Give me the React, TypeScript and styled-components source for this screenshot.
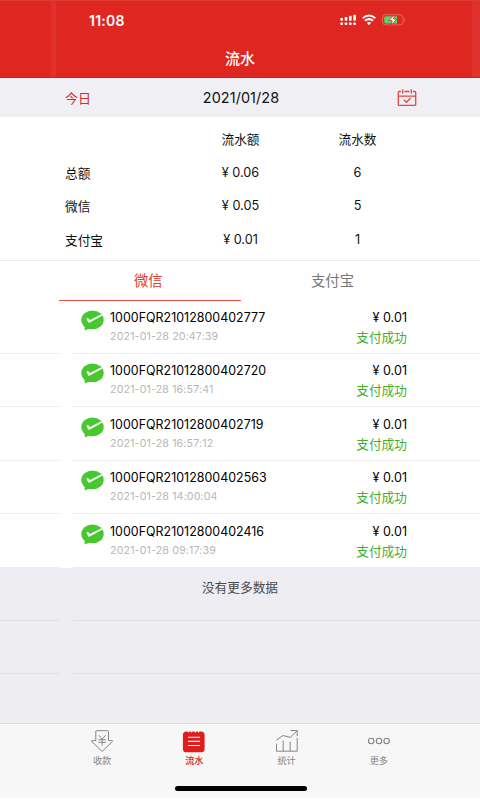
import React from "react";
import styled, { createGlobalStyle, css } from "styled-components";

const GlobalStyle = createGlobalStyle`
  * { box-sizing: border-box; }
  body { margin: 0; background: #fff; }
`;

const Screen = styled.main`
  width: 480px;
  height: 798px;
  display: flex;
  flex-direction: column;
  overflow: hidden;
  background: #fff;
  color: #111;
  font-family: Inter, "Noto Sans CJK SC", sans-serif;
  white-space: nowrap;
`;

const Header = styled.header`
  height: 78px;
  flex: none;
  color: #fff;
  background: linear-gradient(90deg, #df2721 51px, #df322c 51px, #df322c 56px, #df2721 56px, #df2721 472px, #df322c 472px);
  border-top: 1px solid #df3934;
  border-bottom: 1px solid #c9231e;
`;

const StatusBar = styled.div`
  height: 38px;
  padding: 0 74px 0 89px;
  display: flex;
  align-items: center;
  justify-content: space-between;
`;

const Clock = styled.span`
  font-size: 14px;
  font-weight: 600;
  letter-spacing: 0.25px;
  line-height: 18px;
  padding-top: 1px;
`;

const Title = styled.h1`
  margin: 9px 0 0;
  font-size: 15px;
  line-height: 22px;
  font-weight: 500;
  text-align: center;
`;

const DateBar = styled.section`
  height: 39px;
  flex: none;
  display: grid;
  grid-template-columns: 1fr auto 1fr;
  align-items: center;
  padding: 0 63px 0 65px;
  background: #efeff4;
`;

const Today = styled.span`
  font-size: 13px;
  color: #d22b2e;
`;

const CurrentDate = styled.span`
  font-size: 14.4px;
  letter-spacing: 0.1px;
`;

const CalendarSlot = styled.span`
  display: flex;
  justify-content: flex-end;
`;

const Summary = styled.section`
  height: 144px;
  flex: none;
  padding-top: 5px;
  border-bottom: 1px solid #ebebeb;
  font-size: 12.7px;
`;

const SummaryRow = styled.div`
  height: 33.5px;
  display: grid;
  grid-template-columns: 117px 117px 117px;
  padding-left: 65px;
  align-items: center;
  text-align: center;
  & > :first-child { text-align: left; }
`;

const Tabs = styled.nav`
  height: 39.6px;
  flex: none;
  display: flex;
  padding-left: 59px;
`;

const Tab = styled.span<{ $active?: boolean }>`
  width: ${(p) => (p.$active ? 181.5 : 184)}px;
  padding-top: 9px;
  padding-right: ${(p) => (p.$active ? 3 : 0)}px;
  font-size: 14.3px;
  line-height: 22px;
  text-align: center;
  color: ${(p) => (p.$active ? "#df3b35" : "#777")};
  ${(p) => p.$active && css`border-bottom: 1px solid #df4d45;`}
`;

const List = styled.section`
  height: 422.4px;
  flex: none;
  overflow: hidden;
  background: #eeedf2;
`;

const rowLine = (color: string, gap: string) => css`
  &::after {
    content: "";
    height: 1px;
    flex: none;
    background: linear-gradient(90deg, ${color} 59px, ${gap} 59px, ${gap} 73px, ${color} 73px);
  }
`;

const Row = styled.div`
  height: 53.4px;
  display: flex;
  flex-direction: column;
  background: #fff;
  ${rowLine("#ececee", "#fff")}
`;

const RowBody = styled.div`
  flex: 1;
  display: flex;
  padding: 8.400px 73px 0 80.500px;
`;

const RowMain = styled.div`
  flex: 1;
  padding-left: 6.500px;
`;

const OrderId = styled.div`
  font-size: 12.4px;
  letter-spacing: 0.04px;
  line-height: 18px;
  color: #000;
`;

const Timestamp = styled.div`
  margin-top: 1px;
  font-size: 10.7px;
  letter-spacing: 0.12px;
  line-height: 18px;
  color: #b8b8b8;
`;

const RowAmount = styled.div`
  text-align: right;
  font-size: 12.6px;
  line-height: 18px;
  color: #000;
`;

const Success = styled.div`
  margin-top: 1px;
  font-size: 12.7px;
  line-height: 19px;
  color: #43b02e;
`;

const EmptyRow = styled.div`
  height: 53.4px;
  display: flex;
  flex-direction: column;
  font-size: 12.7px;
  line-height: 20px;
  text-align: center;
  color: #4a4a4e;
  ${rowLine("#e1e0e6", "#eeedf2")}
`;

const EmptyText = styled.span`
  flex: 1;
  padding-top: 10px;
`;

const TabBar = styled.footer`
  flex: 1;
  display: flex;
  flex-direction: column;
  align-items: center;
  padding-left: 1px;
  background: #f7f7f7;
  border-top: 1px solid #dcdce0;
`;

const TabItems = styled.div`
  width: 369px;
  height: 62px;
  display: flex;
`;

const TabItem = styled.div<{ $active?: boolean }>`
  flex: 1;
  display: flex;
  flex-direction: column;
  align-items: center;
  padding-top: 5px;
  color: ${(p) => (p.$active ? "#d02424" : "#858585")};
  font-size: 9.2px;
  font-weight: ${(p) => (p.$active ? 500 : 400)};
  line-height: 14px;
  svg { margin-bottom: 1px; }
`;

const HomeIndicator = styled.div`
  width: 132px;
  height: 5px;
  border-radius: 3px;
  background: #000;
`;

const StatusIcons = () => (
  <svg width="66" height="14" viewBox="0 0 66 14">
    <g fill="#fff">
      {[0, 4.3, 8.6, 12.9].map((x, i) => (
        <React.Fragment key={x}>
          <rect x={x + 0.4} y="9.5" width="2.6" height="2.6" rx="0.8" />
          <rect x={x + 0.4} y={5 - i * 1.1} width="2.6" height={2.8 + i * 1.1} rx="0.7" />
        </React.Fragment>
      ))}
    </g>
    <g fill="none" stroke="#fff" strokeWidth="2">
      <path d="M22.7 5.2Q29 -.1 35.3 5.2" />
      <path d="M25 7.8Q29 4.4 33 7.8" />
    </g>
    <path d="M26.9 9.8Q29 8.2 31.1 9.8L29 12.2Z" fill="#fff" />
    <rect x="42.6" y="1.7" width="20.5" height="10.2" rx="3" fill="none" stroke="#e96761" />
    <path d="M64.4 5v4c1.2-.3 1.2-3.700 0-4" fill="#e96761" />
    <path d="M46 3.300h11v7.200H46q-1.800 0-1.800-1.800V5.100q0-1.800 1.800-1.800" fill="#53d769" />
    <path d="M54 1.900l-5.200 5.700h3.300l-.8 4.400 5.500-5.900h-3.300l.9-4.200Z" fill="#fff" stroke="#df2721" strokeWidth=".8" />
  </svg>
);

const CalendarIcon = () => (
  <svg width="20" height="18" viewBox="0 0 20 18" fill="none" stroke="#e04844" strokeWidth="1.300">
    <path d="M4 2.500H2.200Q1.300 2.500 1.300 3.400v12q0 .9.900.9h15.600q.9 0 .9-.9v-12q0-.9-.9-.9H16M7.500 2.500h5M1.300 7.200h17.400M5.700.3v4.400M14.300.3v4.400" />
    <path d="M6.700 10.800l2.700 2.500 4.200-4.300" />
  </svg>
);

const PaidIcon = () => (
  <svg width="23" height="22" viewBox="0 0 23 22">
    <ellipse cx="11.500" cy="10.900" rx="11.200" ry="9.400" fill="#48c72e" />
    <path d="M3.500 16l.3 5.500 5.200-2.300Z" fill="#48c72e" />
    <path d="M5.400 9.700l1.300-1 2.400 2.300L20.400 5.200l1.100 1.300L8.300 13.700Q7.400 14 7 13Z" fill="#fff" />
  </svg>
);

const CollectIcon = () => (
  <svg width="24" height="24" viewBox="0 0 24 24" fill="none" stroke="#858585" strokeWidth="1" strokeLinejoin="round">
    <path d="M6.500 1.700h11.300q.7 0 .7.700v9.200h3.300q1.300 0 .5 1L13 21.700q-.8.800-1.600 0L1.800 12.600q-.9-1 .5-1h3.500V2.400q0-.7.7-.7Z" />
    <path d="M8.700 6.200l3.500 4 3.500-4M8.300 10.700h7.800M8.300 13.300h7.800M12.200 10.200v6.300" />
  </svg>
);

const LedgerIcon = () => (
  <svg width="24" height="24" viewBox="0 0 24 24">
    <path d="M4.500 2h1.200q.6 2.200 1.800 0h1.300q.6 2.200 1.800 0h1.900q.6 2.200 1.800 0h1.500q.6 2.200 1.800 0h1.400q3.600 0 3.600 3.600v13q0 3.600-3.600 3.600H4.500q-3.600 0-3.600-3.600v-13Q.9 2 4.500 2Z" fill="#df1d1b" transform="translate(0 .5) scale(1 1.03)" />
    <path d="M6 8.200h12M6 12.400h12M6 16.500h12" stroke="#fff" strokeWidth="1.100" />
  </svg>
);

const StatsIcon = () => (
  <svg width="24" height="24" viewBox="0 0 24 24" fill="none" stroke="#858585" strokeWidth="1">
    <path d="M1.500 14.700v7.500h20.700V9M8.200 11.500v10.700M15.200 12.700v9.500M1.300 11.200l6.700-4.700 7.300 1.900 6.700-6.600M15.500 1.500h6.700v5.700" />
  </svg>
);

const MoreIcon = () => (
  <svg width="24" height="24" viewBox="0 0 24 24" fill="none" stroke="#858585" strokeWidth="1.100">
    <circle cx="4.200" cy="12" r="2.700" />
    <circle cx="12" cy="12" r="2.700" />
    <circle cx="19.600" cy="12" r="2.700" />
  </svg>
);

const totals = [
  ["", "流水额", "流水数"],
  ["总额", "¥ 0.06", "6"],
  ["微信", "¥ 0.05", "5"],
  ["支付宝", "¥ 0.01", "1"],
];

const payments = [
  ["1000FQR21012800402777", "2021-01-28 20:47:39"],
  ["1000FQR21012800402720", "2021-01-28 16:57:41"],
  ["1000FQR21012800402719", "2021-01-28 16:57:12"],
  ["1000FQR21012800402563", "2021-01-28 14:00:04"],
  ["1000FQR21012800402416", "2021-01-28 09:17:39"],
];

export default function App() {
  return (
    <Screen>
      <GlobalStyle />
      <Header>
        <StatusBar>
          <Clock>11:08</Clock>
          <StatusIcons />
        </StatusBar>
        <Title>流水</Title>
      </Header>
      <DateBar>
        <Today>今日</Today>
        <CurrentDate>2021/01/28</CurrentDate>
        <CalendarSlot><CalendarIcon /></CalendarSlot>
      </DateBar>
      <Summary>
        {totals.map(([label, amount, count]) => (
          <SummaryRow key={label}>
            <span>{label}</span>
            <span>{amount}</span>
            <span>{count}</span>
          </SummaryRow>
        ))}
      </Summary>
      <Tabs>
        <Tab $active>微信</Tab>
        <Tab>支付宝</Tab>
      </Tabs>
      <List>
        {payments.map(([id, time]) => (
          <Row key={id}>
            <RowBody>
              <PaidIcon />
              <RowMain>
                <OrderId>{id}</OrderId>
                <Timestamp>{time}</Timestamp>
              </RowMain>
              <RowAmount>
                ¥ 0.01
                <Success>支付成功</Success>
              </RowAmount>
            </RowBody>
          </Row>
        ))}
        <EmptyRow><EmptyText>没有更多数据</EmptyText></EmptyRow>
        <EmptyRow><EmptyText /></EmptyRow>
        <EmptyRow><EmptyText /></EmptyRow>
      </List>
      <TabBar>
        <TabItems>
          <TabItem><CollectIcon />收款</TabItem>
          <TabItem $active><LedgerIcon />流水</TabItem>
          <TabItem><StatsIcon />统计</TabItem>
          <TabItem><MoreIcon />更多</TabItem>
        </TabItems>
        <HomeIndicator />
      </TabBar>
    </Screen>
  );
}
